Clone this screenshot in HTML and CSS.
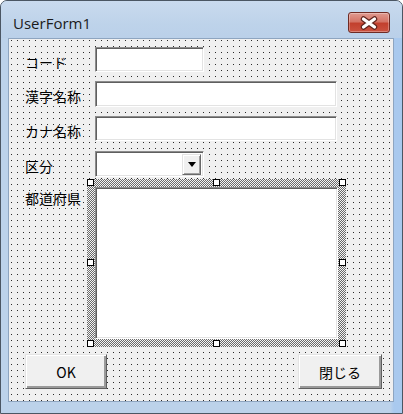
FILE: index.html
```html
<!DOCTYPE html>
<html lang="ja">
<head>
<meta charset="utf-8">
<title>UserForm1</title>
<link rel="stylesheet" href="styles.css">
</head>
<body>
<div class="window">
  <div class="titlebar">
    <span class="title">UserForm1</span>
    <span class="close">
      <svg width="18" height="14" viewBox="0 0 18 14">
        <path d="M3.5 3 L14.5 11 M14.5 3 L3.5 11" stroke="#5e231c" stroke-width="5.5" stroke-linecap="round"/>
        <path d="M3.5 3 L14.5 11 M14.5 3 L3.5 11" stroke="#ffffff" stroke-width="3.2" stroke-linecap="round"/>
      </svg>
    </span>
  </div>
  <div class="frame">
    <div class="client">
      <div class="row r1"><span class="label">コード</span><div class="text w-short"></div></div>
      <div class="row r2"><span class="label">漢字名称</span><div class="text w-long"></div></div>
      <div class="row r3"><span class="label">カナ名称</span><div class="text w-long"></div></div>
      <div class="row r4"><span class="label">区分</span><div class="text combo w-short"><span class="drop"><span class="tri"></span></span></div></div>
      <div class="row list-row">
        <span class="label list-label">都道府県</span>
        <div class="selection">
          <div class="listbox"></div>
          <span class="handle h-tl"></span><span class="handle h-tc"></span><span class="handle h-tr"></span>
          <span class="handle h-ml"></span><span class="handle h-mr"></span>
          <span class="handle h-bl"></span><span class="handle h-bc"></span><span class="handle h-br"></span>
        </div>
      </div>
      <div class="buttons">
        <button class="btn btn-ok">OK</button>
        <button class="btn btn-close">閉じる</button>
      </div>
    </div>
  </div>
</div>
</body>
</html>
```

FILE: styles.css
```css
* { box-sizing: border-box; }
html, body { margin: 0; padding: 0; background: #ffffff; }
body { font-family: "Noto Sans CJK JP", "Noto Sans", sans-serif; }

.window {
  width: 403px;
  height: 414px;
  border: 1px solid #4b5663;
  border-radius: 7px 7px 0 0;
  background: #bcd2ea;
  display: flex;
  flex-direction: column;
  overflow: hidden;
}

.titlebar {
  height: 37px;
  flex: none;
  display: flex;
  align-items: flex-start;
  padding: 0 12px 0 12px;
  background: linear-gradient(to bottom, #c9daee 0%, #bed3ea 60%, #bad0e9 100%);
}
.title {
  flex: 1;
  margin-top: 12px;
  font-family: "Open Sans", "Liberation Sans", sans-serif;
  font-size: 15px;
  line-height: 20px;
  color: #1b1b1b;
}
.close {
  margin-top: 11px;
  width: 42px;
  height: 21px;
  border: 1px solid #6e2b24;
  border-radius: 3px;
  background: linear-gradient(to bottom, #e09a90 0%, #d47466 45%, #c2402e 55%, #cb5240 100%);
  box-shadow: inset 0 0 0 1px rgba(255,255,255,0.3);
  display: flex;
  align-items: center;
  justify-content: center;
}
.close svg { display: block; }

.frame {
  flex: 1;
  padding: 0 8px 10px 7px;
  background: linear-gradient(to right, #bcd2ea 0%, #bcd2ea 97%, #a9c9ee 98%, #a9c9ee 100%);
}
.client {
  height: 364px;
  border: 1px solid #8ea5c0;
  padding: 8px 0 0 16px;
  background-color: #f0f0f0;
  background-image:
    repeating-linear-gradient(to bottom, transparent 0 1px, #f0f0f0 1px 6px),
    repeating-linear-gradient(to right, #2a2a2a 0 1px, #f0f0f0 1px 6px);
  background-position: 2px 1px, 2px 1px;
  font-size: 14px;
  color: #000;
}

.row { display: flex; align-items: center; }
.r1 { height: 25px; margin-bottom: 9px; }
.r2 { height: 26px; margin-bottom: 9px; }
.r3 { height: 25px; margin-bottom: 10px; }
.r4 { height: 26px; margin-bottom: 2px; }
.list-row { height: 168px; margin-bottom: 7px; align-items: flex-start; }

.label {
  width: 70px;
  flex: none;
  line-height: 16px;
  padding-top: 4px;
  white-space: nowrap;
}
.list-label { padding-top: 11px; }

.text {
  height: 100%;
  background: #ffffff;
  border: 1px solid;
  border-color: #8c8c8c #ffffff #ffffff #8c8c8c;
  box-shadow: inset 1px 1px 0 #5f5f5f, inset -1px -1px 0 #e3e3e3;
}
.w-short { width: 109px; }
.w-long { width: 242px; }

.combo {
  display: flex;
  justify-content: flex-end;
  align-items: center;
  padding-right: 2px;
}
.drop {
  width: 19px;
  height: 21px;
  background: #f0f0f0;
  border: 1px solid;
  border-color: #e3e3e3 #696969 #696969 #e3e3e3;
  box-shadow: inset 1px 1px 0 #ffffff, inset -1px -1px 0 #a0a0a0;
  display: flex;
  align-items: center;
  justify-content: center;
}
.tri {
  width: 0;
  height: 0;
  border-left: 4.5px solid transparent;
  border-right: 4.5px solid transparent;
  border-top: 5px solid #000;
  margin-top: 1px;
}

.selection {
  position: relative;
  margin-left: -8px;
  width: 259px;
  height: 168px;
  padding: 8px;
  background: repeating-conic-gradient(#6a6a6a 0 25%, #f4f4f4 0 50%) 0 0 / 2px 2px;
}
.listbox {
  width: 100%;
  height: 100%;
  background: #ffffff;
  border: 1px solid;
  border-color: #8c8c8c #ffffff #ffffff #8c8c8c;
  box-shadow: inset 1px 1px 0 #5f5f5f, inset -1px -1px 0 #e3e3e3;
}
.handle {
  position: absolute;
  width: 7px;
  height: 7px;
  background: #ffffff;
  border: 1px solid #000;
}
.h-tl { left: 0; top: 0; }
.h-tc { left: 126px; top: 0; }
.h-tr { left: 252px; top: 0; }
.h-ml { left: 0; top: 80px; }
.h-mr { left: 252px; top: 80px; }
.h-bl { left: 0; top: 161px; }
.h-bc { left: 126px; top: 161px; }
.h-br { left: 252px; top: 161px; }

.buttons {
  display: flex;
  justify-content: space-between;
  margin-right: 11px;
  height: 35px;
}
.btn {
  height: 35px;
  margin: 0;
  padding: 0;
  font-family: "Noto Sans CJK JP", "Noto Sans", sans-serif;
  font-size: 14px;
  color: #000;
  background: #f0f0f0;
  border: 1px solid;
  border-color: #e3e3e3 #5f5f5f #5f5f5f #e3e3e3;
  box-shadow: inset 1px 1px 0 #ffffff, inset -2px -2px 0 #9a9a9a;
  border-radius: 0;
}
.btn-ok { width: 82px; }
.btn-close { width: 84px; }
```
